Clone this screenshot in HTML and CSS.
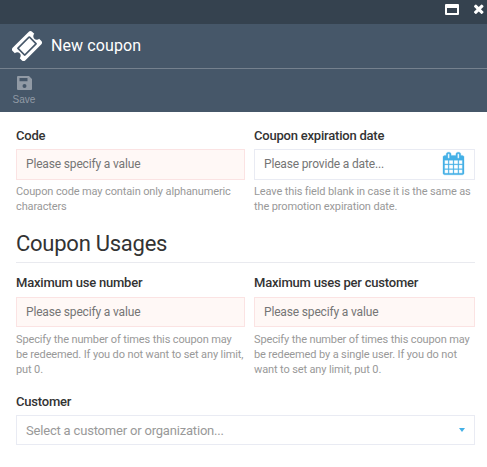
FILE: index.html
```html
<!DOCTYPE html>
<html lang="en">
<head>
<meta charset="utf-8">
<title>New coupon</title>
<link rel="stylesheet" href="styles.css">
</head>
<body>
<header class="blade-head">
  <div class="controls">
    <svg class="maximize" viewBox="0 0 14 12"><path fill-rule="evenodd" d="M1 0h12a1 1 0 0 1 1 1v9a1 1 0 0 1-1 1H1a1 1 0 0 1-1-1V1a1 1 0 0 1 1-1zM2 4v5h10V4z"/></svg>
    <svg class="close" viewBox="302 302 1188 1188"><path d="M1490 1322q0 40-28 68l-136 136q-28 28-68 28t-68-28l-294-294-294 294q-28 28-68 28t-68-28l-136-136q-28-28-28-68t28-68l294-294-294-294q-28-28-28-68t28-68l136-136q28-28 68-28t68 28l294 294 294-294q28-28 68-28t68 28l136 136q28 28 28 68t-28 68l-294 294 294 294q28 28 28 68z"/></svg>
  </div>
  <div class="title-row">
    <svg class="ticket" viewBox="0 0 1792 1792"><path d="M1024 452l316 316-572 572-316-316zm-211 979l618-618q19-19 19-45t-19-45l-362-362q-18-18-45-18t-45 18l-618 618q-19 19-19 45t19 45l362 362q18 18 45 18t45-18zm889-637l-907 908q-37 37-90.5 37t-90.5-37l-126-126q56-56 56-136t-56-136-136-56-136 56l-125-126q-37-37-37-90.5t37-90.5l907-906q37-37 90.5-37t90.5 37l125 125q-56 56-56 136t56 136 136 56 136-56l126 125q37 37 37 90.5t-37 90.5z"/></svg>
    <h1>New coupon</h1>
  </div>
  <div class="toolbar">
    <button class="tool">
      <svg viewBox="0 0 15 14"><path fill-rule="evenodd" d="M1 0H12l3 3v10a1 1 0 0 1-1 1H1a1 1 0 0 1-1-1V1a1 1 0 0 1 1-1zM2.500 2v3.200h8V2zM7.500 8a2 2 0 1 0 0 4 2 2 0 0 0 0-4z"/></svg>
      <span>Save</span>
    </button>
  </div>
</header>
<main class="form">
  <div class="row">
    <div class="field">
      <label>Code</label>
      <div class="input tall required">Please specify a value</div>
      <p>Coupon code may contain only alphanumeric characters</p>
    </div>
    <div class="field">
      <label>Coupon expiration date</label>
      <div class="input tall">Please provide a date...
        <svg class="calendar" viewBox="64 0 1664 1792"><path d="M192 1664h288v-288h-288v288zm352 0h320v-288h-320v288zm-352-352h288v-320h-288v320zm352 0h320v-320h-320v320zm-352-384h288v-288h-288v288zm736 736h320v-288h-320v288zm-384-736h320v-288h-320v288zm768 736h288v-288h-288v288zm-384-352h320v-320h-320v320zm-352-864v-288q0-13-9.500-22.500t-22.500-9.500h-64q-13 0-22.500 9.500t-9.500 22.500v288q0 13 9.500 22.500t22.500 9.500h64q13 0 22.500-9.500t9.500-22.500zm736 864h288v-320h-288v320zm-384-384h320v-288h-320v288zm384 0h288v-288h-288v288zm32-480v-288q0-13-9.500-22.500t-22.500-9.500h-64q-13 0-22.500 9.500t-9.500 22.500v288q0 13 9.500 22.500t22.500 9.500h64q13 0 22.500-9.500t9.500-22.500zm384-64v1280q0 52-38 90t-90 38h-1408q-52 0-90-38t-38-90v-1280q0-52 38-90t90-38h128v-96q0-66 47-113t113-47h64q66 0 113 47t47 113v96h384v-96q0-66 47-113t113-47h64q66 0 113 47t47 113v96h128q52 0 90 38t38 90z"/></svg>
      </div>
      <p>Leave this field blank in case it is the same as the promotion expiration date.</p>
    </div>
  </div>
  <h2>Coupon Usages</h2>
  <div class="row usages">
    <div class="field">
      <label>Maximum use number</label>
      <div class="input required">Please specify a value</div>
      <p>Specify the number of times this coupon may<br>be redeemed. If you do not want to set any limit, put 0.</p>
    </div>
    <div class="field">
      <label>Maximum uses per customer</label>
      <div class="input required">Please specify a value</div>
      <p>Specify the number of times this coupon may be redeemed by a single user. If you do not want to set any limit, put 0.</p>
    </div>
  </div>
  <div class="field customer">
    <label>Customer</label>
    <div class="input select">Select a customer or organization...<i class="caret"></i></div>
  </div>
</main>
</body>
</html>
```
FILE: styles.css
```css
* { box-sizing: border-box; }
body { margin: 0; background: #fff; font-family: Roboto, "Liberation Sans", sans-serif; color: #333; }
h1, h2, p { margin: 0; font-weight: 400; }
svg { display: block; fill: currentColor; flex: none; }

.blade-head { height: 112px; background: #465769; color: #fff; }
.controls { height: 24px; padding: 4px 3.5px 0 0; background: #35424f; display: flex; justify-content: flex-end; gap: 15px; }
.maximize { width: 14px; height: 12px; }
.close { width: 9.5px; height: 9.5px; overflow: visible; }
.title-row { height: 45px; border-bottom: 1px solid #75818e; padding-left: 11px; display: flex; align-items: center; gap: 8px; }
.ticket { width: 32px; height: 32px; }
h1 { font-size: 16px; line-height: 20px; letter-spacing: 0.1px; }
.toolbar { padding-left: 9px; }
.tool { width: 30px; border: 0; padding: 7px 0 0; background: none; color: #919aa5; font: 10px/12px "Liberation Sans", Arial, sans-serif; display: flex; flex-direction: column; align-items: center; gap: 4px; }
.tool svg { width: 15px; height: 14px; }

.form { padding: 16px 12px 0 16px; }
.row { display: grid; grid-template-columns: 229px 221px; column-gap: 9px; }
label { display: block; font-size: 13px; font-weight: 500; line-height: 16px; letter-spacing: -0.21px; margin-bottom: 5px; }
.input { height: 30px; border: 1px solid #e9ebf3; padding: 0 9px; font-size: 12px; letter-spacing: -0.16px; color: #757575; display: flex; align-items: center; justify-content: space-between; }
.tall { height: 31px; padding-bottom: 2px; }
.required { background: #fff8f6; border-color: #fbe3e3; }
.field p { margin: 4px -2px 0 0; font-size: 11px; line-height: 15px; letter-spacing: -0.125px; color: #999; }
.calendar { width: 21px; height: 23px; margin-right: 1px; color: #43b0e6; stroke: currentColor; stroke-width: 24; overflow: visible; }
h2 { font-size: 22px; line-height: 26px; height: 32px; margin-top: 17px; letter-spacing: -0.25px; border-bottom: 1px solid #e9eaef; }
.usages { margin-top: 12px; }
.usages label { margin-bottom: 6px; }
.usages .field p { margin-top: 5px; }
.customer { margin-top: 17px; }
.select { font-size: 13px; letter-spacing: -0.19px; color: #999; }
.caret { border: 3px solid transparent; border-top: 4px solid #43b0e6; border-bottom: 0; }
```
